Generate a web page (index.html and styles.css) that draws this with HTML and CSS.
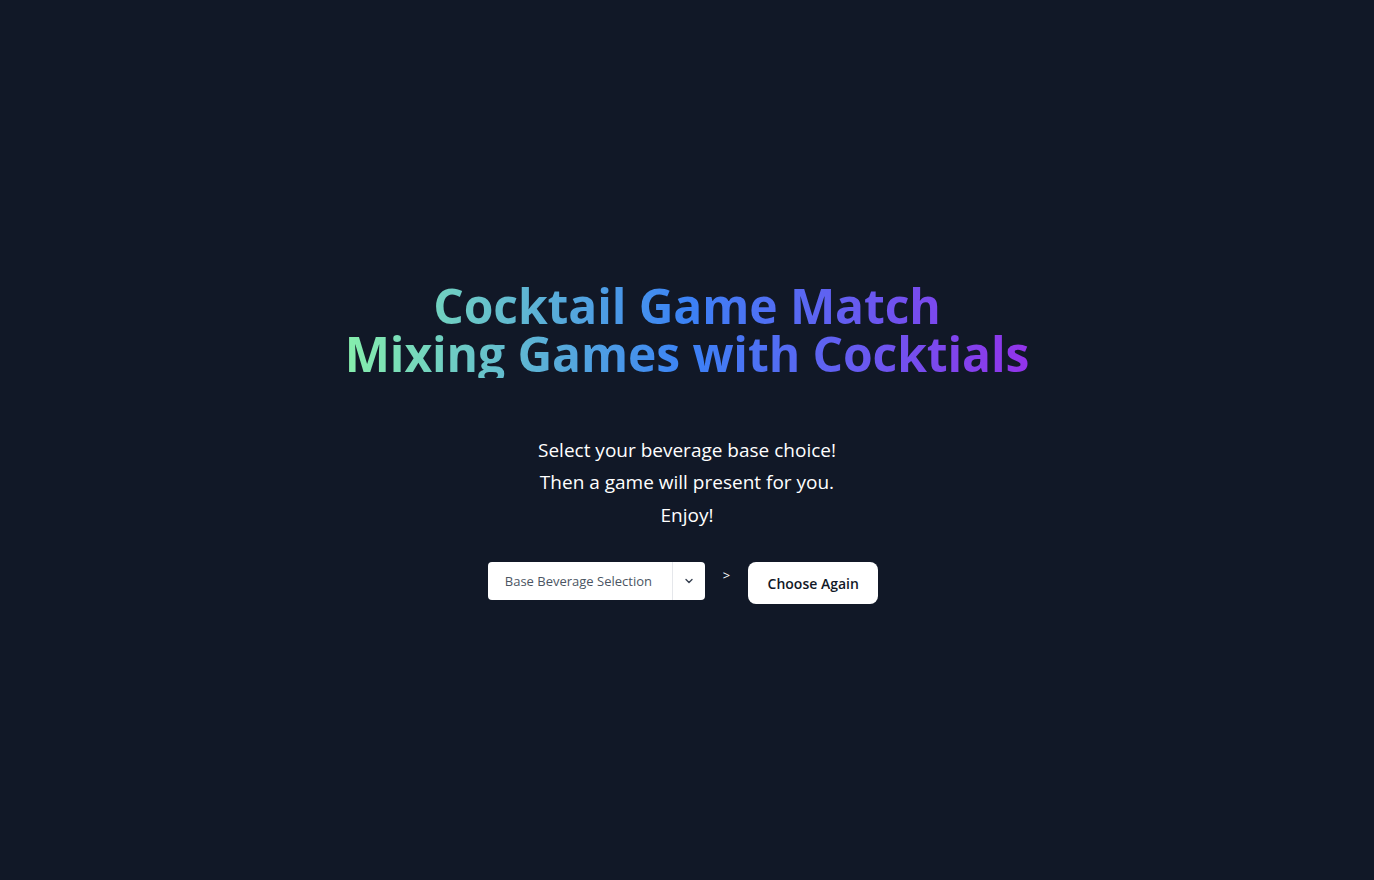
FILE: index.html
```html
<!DOCTYPE html>
<html>
<head>
<meta charset="utf-8">
<link rel="stylesheet" href="styles.css">
</head>
<body>
<main class="page">
  <h1 class="title">Cocktail Game Match<br>Mixing Games with Cocktials</h1>
  <div class="intro">
    <p>Select your beverage base choice!</p>
    <p>Then a game will present for you.</p>
    <p>Enjoy!</p>
  </div>
  <div class="controls">
    <div class="select">
      <span class="select-label">Base Beverage Selection</span>
      <span class="select-arrow">
        <svg width="10" height="10" viewBox="0 0 10 10"><path d="M2 3.5 L5 6.5 L8 3.5" fill="none" stroke="#374151" stroke-width="1.4" stroke-linecap="round" stroke-linejoin="round"/></svg>
      </span>
    </div>
    <span class="arrow">&gt;</span>
    <button class="btn">Choose Again</button>
  </div>
</main>
</body>
</html>
```
FILE: styles.css
```css
html, body {
  margin: 0;
  padding: 0;
  background: #111827;
  font-family: "Open Sans", "Noto Sans", sans-serif;
}
.page {
  min-height: 880px;
  display: flex;
  flex-direction: column;
  align-items: center;
  justify-content: center;
  box-sizing: border-box;
  padding-top: 6px;
}
.title {
  display: inline-block;
  margin: 0;
  font-size: 48px;
  line-height: 48px;
  font-weight: 700;
  letter-spacing: -0.1px;
  text-align: center;
  background: linear-gradient(to right, #86efac, #3b82f6, #9333ea);
  -webkit-background-clip: text;
  background-clip: text;
  color: transparent;
}
.intro {
  margin-top: 56px;
  text-align: center;
  color: #ffffff;
  font-size: 19px;
  line-height: 32.5px;
}
.intro p { margin: 0; }
.controls {
  margin-top: 31px;
  display: flex;
  align-items: flex-start;
  padding-right: 8px;
}
.select {
  display: flex;
  height: 38px;
  width: 217px;
  background: #fff;
  border-radius: 4px;
  box-sizing: border-box;
}
.select-label {
  flex: 1;
  display: flex;
  align-items: center;
  padding-left: 17px;
  font-size: 13px;
  color: #4b5563;
  border-right: 1px solid #e5e7eb;
}
.select-arrow {
  width: 32px;
  display: flex;
  align-items: center;
  justify-content: center;
}
.arrow {
  color: #fff;
  font-size: 13px;
  margin: 4px 18px 0 18px;
}
.btn {
  height: 42px;
  width: 130px;
  background: #fff;
  border: none;
  border-radius: 8px;
  font-family: inherit;
  font-size: 14px;
  font-weight: 550;
  color: #111827;
  padding: 0;
}
```
